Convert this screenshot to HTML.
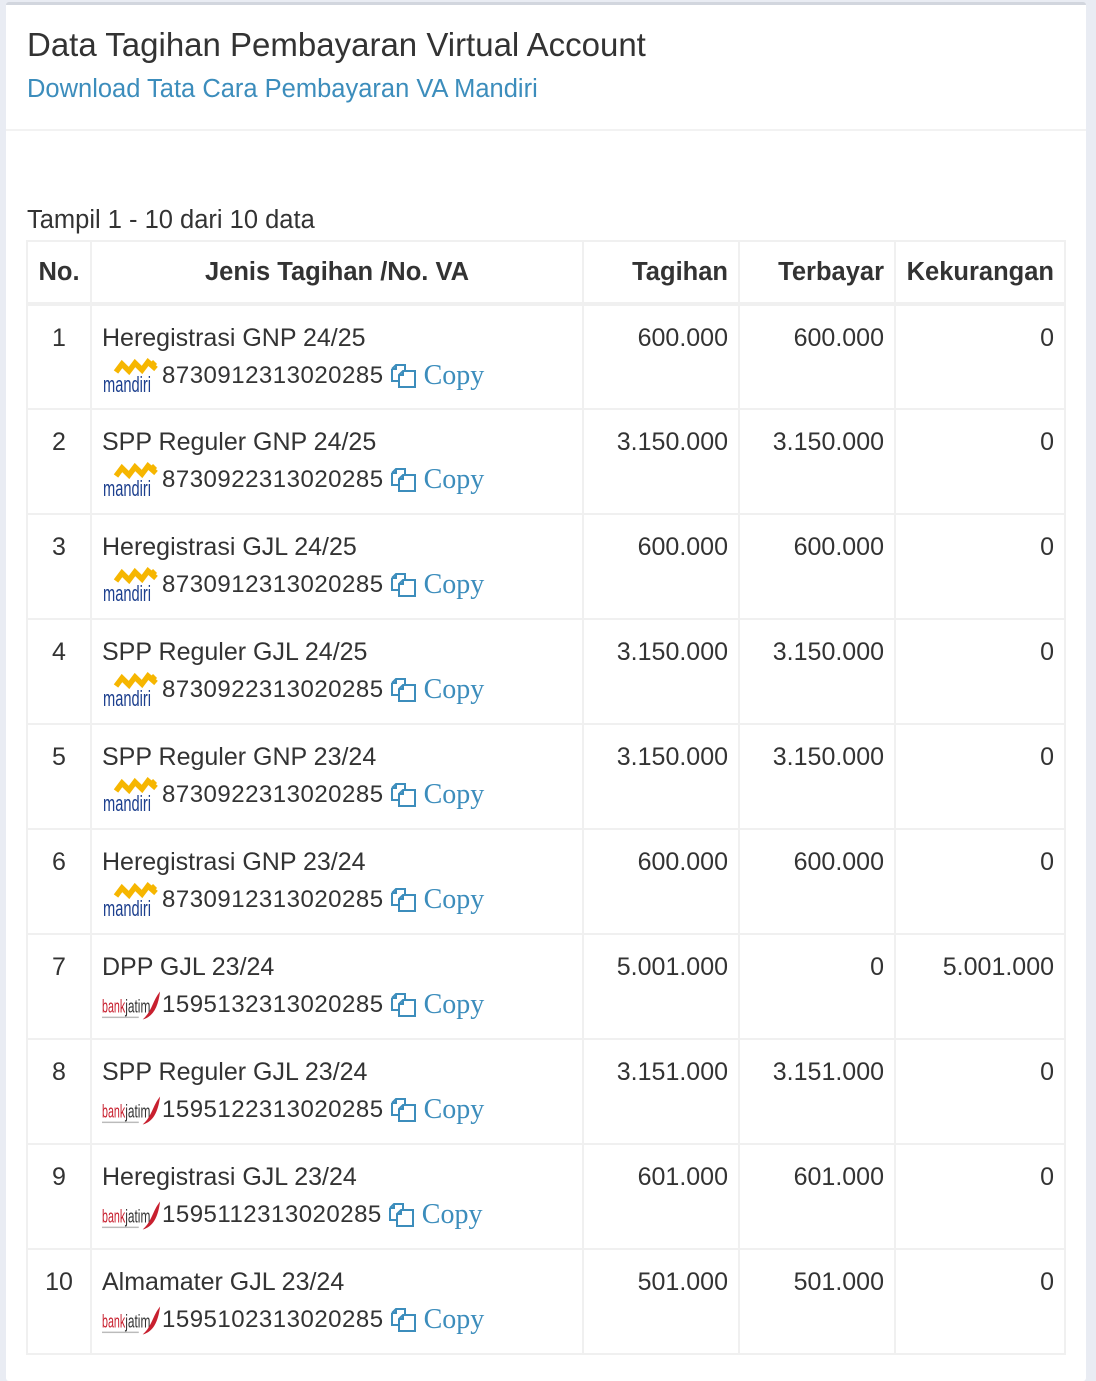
<!DOCTYPE html>
<html><head><meta charset="utf-8"><style>
body{margin:0;background:#e9ecf3;width:1096px;height:1380px;overflow:hidden;font-family:"Liberation Sans",sans-serif;color:#333}
.card{position:absolute;left:6px;top:2px;width:1080px;height:1376px;background:#fff;border-top:3px solid #d2d6de;border-radius:3px}
.h1{position:absolute;left:21px;top:21px;font-size:33px;color:#333;white-space:nowrap}
.dl{position:absolute;left:21px;top:70px;font-size:25.5px;color:#3c8dbc;white-space:nowrap}
.sep{position:absolute;left:0;top:124px;width:1080px;height:2px;background:#f2f2f2}
.tp{position:absolute;left:21px;top:201px;font-size:25.5px;white-space:nowrap}
table{position:absolute;left:26px;top:240px;border-collapse:collapse;table-layout:fixed}
td,th{border:2px solid #f0f0f0;vertical-align:top;font-size:25px;white-space:nowrap;padding:0 10px}
th{height:60px;vertical-align:middle;font-weight:bold;font-size:25.5px;border-bottom:4px solid #f0f0f0}
td{height:105px;padding-top:18px;box-sizing:border-box}
.r{text-align:right}.c{text-align:center}
.va{display:flex;align-items:center;margin-top:6px;height:34px}
.num{font-size:24px;letter-spacing:0.5px}
.cp{font-family:"Liberation Serif",serif;color:#3c8dbc;font-size:28px;margin-left:6px}
.ic{margin-left:6px}
</style></head><body>
<div class="card">
<div class="h1">Data Tagihan Pembayaran Virtual Account</div>
<div class="dl">Download Tata Cara Pembayaran VA Mandiri</div>
<div class="sep"></div>
<div class="tp">Tampil 1 - 10 dari 10 data</div>
</div>
<svg width="0" height="0" style="position:absolute"><defs>
<symbol id="m" viewBox="0 0 60 36"><path d="M14 14 L20 6 L27 13 L33 5 L40 12 L46 4 L54 11" fill="none" stroke="#f6b600" stroke-width="5.5"/><path d="M50 3 l4 4" stroke="#f6b600" stroke-width="3"/><text x="1" y="34" font-family="Liberation Sans Narrow,Liberation Sans,sans-serif" font-size="22" fill="#1c3f8e" textLength="48" lengthAdjust="spacingAndGlyphs">mandiri</text></symbol>
<symbol id="b" viewBox="0 0 62 36"><text x="0" y="26" font-family="Liberation Sans Narrow,Liberation Sans,sans-serif" font-size="19" fill="#c8202f" textLength="24" lengthAdjust="spacingAndGlyphs">bank</text><text x="24" y="26" font-family="Liberation Sans Narrow,Liberation Sans,sans-serif" font-size="19" fill="#333" textLength="26" lengthAdjust="spacingAndGlyphs">jatim</text><path d="M60 4 C52 14 52 24 42 33 C53 30 58 20 60 4Z" fill="#c8202f"/><rect x="0" y="30" width="38" height="1.5" fill="#bbb"/></symbol>
<symbol id="c" viewBox="0 0 28 26"><path d="M2 6 L6 2 L15 2 L15 8 M2 6 L6 6 L6 2 M2 6 L2 18 L9 18" fill="none" stroke="#3c8dbc" stroke-width="2"/><path d="M9 12 L13 8 L25 8 L25 24 L9 24 Z M9 12 L13 12 L13 8" fill="none" stroke="#3c8dbc" stroke-width="2"/></symbol>
</defs></svg>
<table>
<colgroup><col style="width:64px"><col style="width:492px"><col style="width:156px"><col style="width:156px"><col style="width:170px"></colgroup>
<tr><th class="c">No.</th><th class="c">Jenis Tagihan /No. VA</th><th class="r">Tagihan</th><th class="r">Terbayar</th><th class="r">Kekurangan</th></tr>
<tr><td class="c">1</td><td>Heregistrasi GNP 24/25<div class="va"><svg width="60" height="36"><use href="#m"/></svg><span class="num">8730912313020285</span><svg class="ic" width="28" height="26"><use href="#c"/></svg><span class="cp">Copy</span></div></td><td class="r">600.000</td><td class="r">600.000</td><td class="r">0</td></tr>
<tr><td class="c">2</td><td>SPP Reguler GNP 24/25<div class="va"><svg width="60" height="36"><use href="#m"/></svg><span class="num">8730922313020285</span><svg class="ic" width="28" height="26"><use href="#c"/></svg><span class="cp">Copy</span></div></td><td class="r">3.150.000</td><td class="r">3.150.000</td><td class="r">0</td></tr>
<tr><td class="c">3</td><td>Heregistrasi GJL 24/25<div class="va"><svg width="60" height="36"><use href="#m"/></svg><span class="num">8730912313020285</span><svg class="ic" width="28" height="26"><use href="#c"/></svg><span class="cp">Copy</span></div></td><td class="r">600.000</td><td class="r">600.000</td><td class="r">0</td></tr>
<tr><td class="c">4</td><td>SPP Reguler GJL 24/25<div class="va"><svg width="60" height="36"><use href="#m"/></svg><span class="num">8730922313020285</span><svg class="ic" width="28" height="26"><use href="#c"/></svg><span class="cp">Copy</span></div></td><td class="r">3.150.000</td><td class="r">3.150.000</td><td class="r">0</td></tr>
<tr><td class="c">5</td><td>SPP Reguler GNP 23/24<div class="va"><svg width="60" height="36"><use href="#m"/></svg><span class="num">8730922313020285</span><svg class="ic" width="28" height="26"><use href="#c"/></svg><span class="cp">Copy</span></div></td><td class="r">3.150.000</td><td class="r">3.150.000</td><td class="r">0</td></tr>
<tr><td class="c">6</td><td>Heregistrasi GNP 23/24<div class="va"><svg width="60" height="36"><use href="#m"/></svg><span class="num">8730912313020285</span><svg class="ic" width="28" height="26"><use href="#c"/></svg><span class="cp">Copy</span></div></td><td class="r">600.000</td><td class="r">600.000</td><td class="r">0</td></tr>
<tr><td class="c">7</td><td>DPP GJL 23/24<div class="va"><svg width="60" height="36"><use href="#b"/></svg><span class="num">1595132313020285</span><svg class="ic" width="28" height="26"><use href="#c"/></svg><span class="cp">Copy</span></div></td><td class="r">5.001.000</td><td class="r">0</td><td class="r">5.001.000</td></tr>
<tr><td class="c">8</td><td>SPP Reguler GJL 23/24<div class="va"><svg width="60" height="36"><use href="#b"/></svg><span class="num">1595122313020285</span><svg class="ic" width="28" height="26"><use href="#c"/></svg><span class="cp">Copy</span></div></td><td class="r">3.151.000</td><td class="r">3.151.000</td><td class="r">0</td></tr>
<tr><td class="c">9</td><td>Heregistrasi GJL 23/24<div class="va"><svg width="60" height="36"><use href="#b"/></svg><span class="num">1595112313020285</span><svg class="ic" width="28" height="26"><use href="#c"/></svg><span class="cp">Copy</span></div></td><td class="r">601.000</td><td class="r">601.000</td><td class="r">0</td></tr>
<tr><td class="c">10</td><td>Almamater GJL 23/24<div class="va"><svg width="60" height="36"><use href="#b"/></svg><span class="num">1595102313020285</span><svg class="ic" width="28" height="26"><use href="#c"/></svg><span class="cp">Copy</span></div></td><td class="r">501.000</td><td class="r">501.000</td><td class="r">0</td></tr>
</table>
</body></html>
